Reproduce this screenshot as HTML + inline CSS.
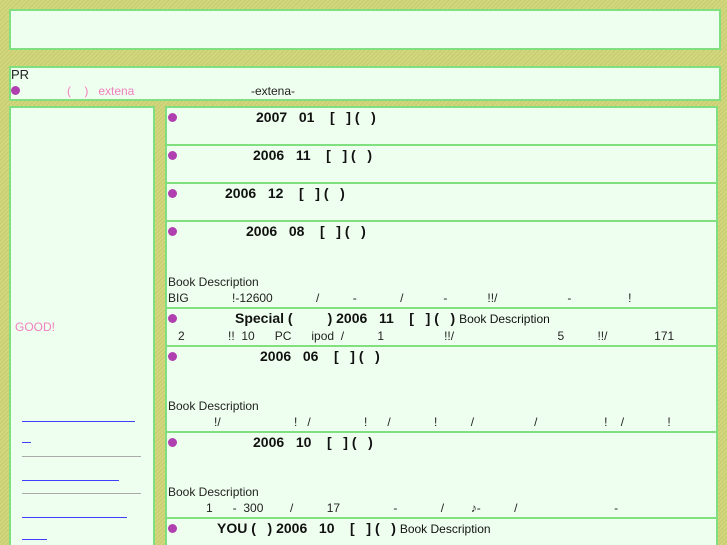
<!DOCTYPE html>
<html style="overflow:hidden"><head><meta charset="utf-8"><style>
html,body{overflow:hidden}
body{margin:0;width:727px;height:545px;position:relative;
background:repeating-linear-gradient(135deg,#d2d67e 0 2px,#c6cc6c 2px 3px);
font-family:"Liberation Sans","DejaVu Sans",sans-serif;font-size:12px;color:#222}
.box{position:absolute;background:#efffef;border:2px solid #80e080;box-sizing:border-box}
.t{position:absolute;white-space:pre;line-height:14px}
.b{font-weight:bold;font-size:14px;color:#111}
.dot{position:absolute;width:9px;height:9px;border-radius:50%;background:#b040b0}
.hl{position:absolute;left:166px;width:551px;height:2px;background:#80e080}
.ln{position:absolute;height:1px}
</style></head><body>
<div class="box" style="left:9px;top:9px;width:712px;height:41px"></div>
<div class="box" style="left:9px;top:66px;width:712px;height:35px"></div>
<div class="t" style="left:11px;top:68px;font-size:13px">PR</div>
<div class="dot" style="left:11px;top:86px"></div>
<div class="t" style="left:67px;top:84px;color:#f080c0">(    )   extena</div>
<div class="t" style="left:251px;top:84px">-extena-</div>

<div class="box" style="left:9px;top:106px;width:146px;height:439px;border-bottom:none"></div>
<div class="t" style="left:15px;top:320px;color:#f080c0">GOOD!</div>
<div class="ln" style="left:22px;top:421px;width:113px;background:#4040ff"></div>
<div class="ln" style="left:22px;top:442px;width:9px;background:#4040ff"></div>
<div class="ln" style="left:22px;top:456px;width:119px;background:#aaa"></div>
<div class="ln" style="left:22px;top:480px;width:97px;background:#4040ff"></div>
<div class="ln" style="left:22px;top:493px;width:119px;background:#aaa"></div>
<div class="ln" style="left:22px;top:517px;width:105px;background:#4040ff"></div>
<div class="ln" style="left:22px;top:539px;width:25px;background:#4040ff"></div>

<div class="box" style="left:165px;top:106px;width:553px;height:439px;border-bottom:none"></div>
<div class="hl" style="top:144px"></div><div class="hl" style="top:182px"></div>
<div class="hl" style="top:220px"></div><div class="hl" style="top:307px"></div>
<div class="hl" style="top:345px"></div><div class="hl" style="top:431px"></div>
<div class="hl" style="top:517px"></div>

<div class="dot" style="left:168px;top:113px"></div><div class="t b" style="left:256px;top:110px">2007   01    [   ] (   )</div>
<div class="dot" style="left:168px;top:151px"></div><div class="t b" style="left:253px;top:148px">2006   11    [   ] (   )</div>
<div class="dot" style="left:168px;top:189px"></div><div class="t b" style="left:225px;top:186px">2006   12    [   ] (   )</div>
<div class="dot" style="left:168px;top:227px"></div><div class="t b" style="left:246px;top:224px">2006   08    [   ] (   )</div>
<div class="t" style="left:168px;top:275px">Book Description</div>
<div class="t" style="left:168px;top:291px">BIG             !-12600             /          -             /            -            !!/                     -                 !</div>
<div class="dot" style="left:168px;top:314px"></div><div class="t b" style="left:235px;top:311px">Special (         ) 2006   11    [   ] (   ) <span style="font-weight:normal;font-size:12px">Book Description</span></div>
<div class="t" style="left:178px;top:329px">2             !!  10      PC      ipod  /          1                  !!/                               5          !!/              171</div>
<div class="dot" style="left:168px;top:352px"></div><div class="t b" style="left:260px;top:349px">2006   06    [   ] (   )</div>
<div class="t" style="left:168px;top:399px">Book Description</div>
<div class="t" style="left:214px;top:415px">!/                      !   /                !      /             !          /                  /                    !    /             !</div>
<div class="dot" style="left:168px;top:438px"></div><div class="t b" style="left:253px;top:435px">2006   10    [   ] (   )</div>
<div class="t" style="left:168px;top:485px">Book Description</div>
<div class="t" style="left:206px;top:501px">1      -  300        /          17                -             /        ♪-          /                             -</div>
<div class="dot" style="left:168px;top:524px"></div><div class="t b" style="left:217px;top:521px">YOU (   ) 2006   10    [   ] (   ) <span style="font-weight:normal;font-size:12px">Book Description</span></div>
</body></html>
